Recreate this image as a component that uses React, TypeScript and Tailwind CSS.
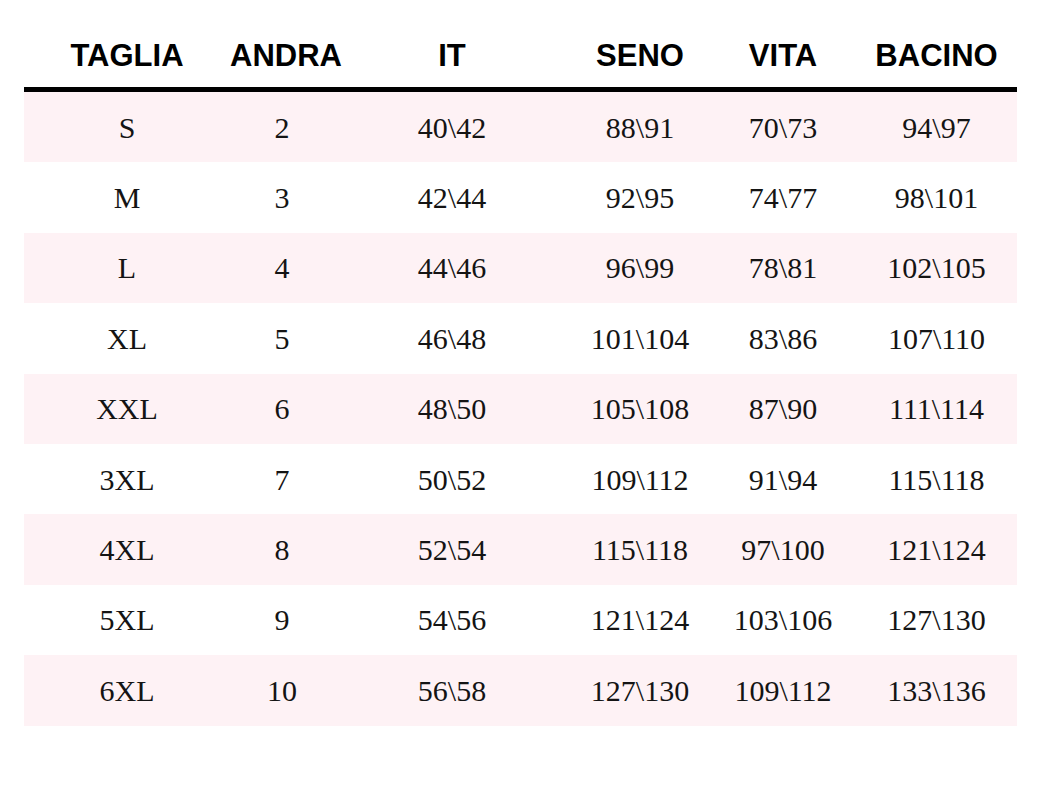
const headers = ['TAGLIA', 'ANDRA', 'IT', 'SENO', 'VITA', 'BACINO'];

const rows: string[][] = [
  ['S', '2', '40\\42', '88\\91', '70\\73', '94\\97'],
  ['M', '3', '42\\44', '92\\95', '74\\77', '98\\101'],
  ['L', '4', '44\\46', '96\\99', '78\\81', '102\\105'],
  ['XL', '5', '46\\48', '101\\104', '83\\86', '107\\110'],
  ['XXL', '6', '48\\50', '105\\108', '87\\90', '111\\114'],
  ['3XL', '7', '50\\52', '109\\112', '91\\94', '115\\118'],
  ['4XL', '8', '52\\54', '115\\118', '97\\100', '121\\124'],
  ['5XL', '9', '54\\56', '121\\124', '103\\106', '127\\130'],
  ['6XL', '10', '56\\58', '127\\130', '109\\112', '133\\136'],
];

const cols = 'grid grid-cols-[206px_104px_236px_140px_146px_161px]';

export default function App() {
  return (
    <div className="w-[1048px] h-[800px] bg-white pt-[40px] pl-[24px]">
      <div className="w-[993px]">
        {/* header */}
        <div className={`${cols} pb-[16px] border-b-[5px] border-black`}>
          {headers.map((h) => (
            <div
              key={h}
              className="text-center text-[31px] leading-[31px] font-bold text-black font-['Liberation_Sans',Arial,sans-serif]"
            >
              {h}
            </div>
          ))}
        </div>

        {/* body */}
        {rows.map((row, i) => (
          <div
            key={i}
            className={`${cols} h-[70.4px] items-center ${i % 2 === 0 ? 'bg-[#fef2f5]' : 'bg-white'}`}
          >
            {row.map((cell, j) => (
              <div
                key={j}
                className="text-center text-[30px] text-[#141414] font-['Liberation_Serif','Times_New_Roman',serif]"
              >
                {cell}
              </div>
            ))}
          </div>
        ))}
      </div>
    </div>
  );
}
